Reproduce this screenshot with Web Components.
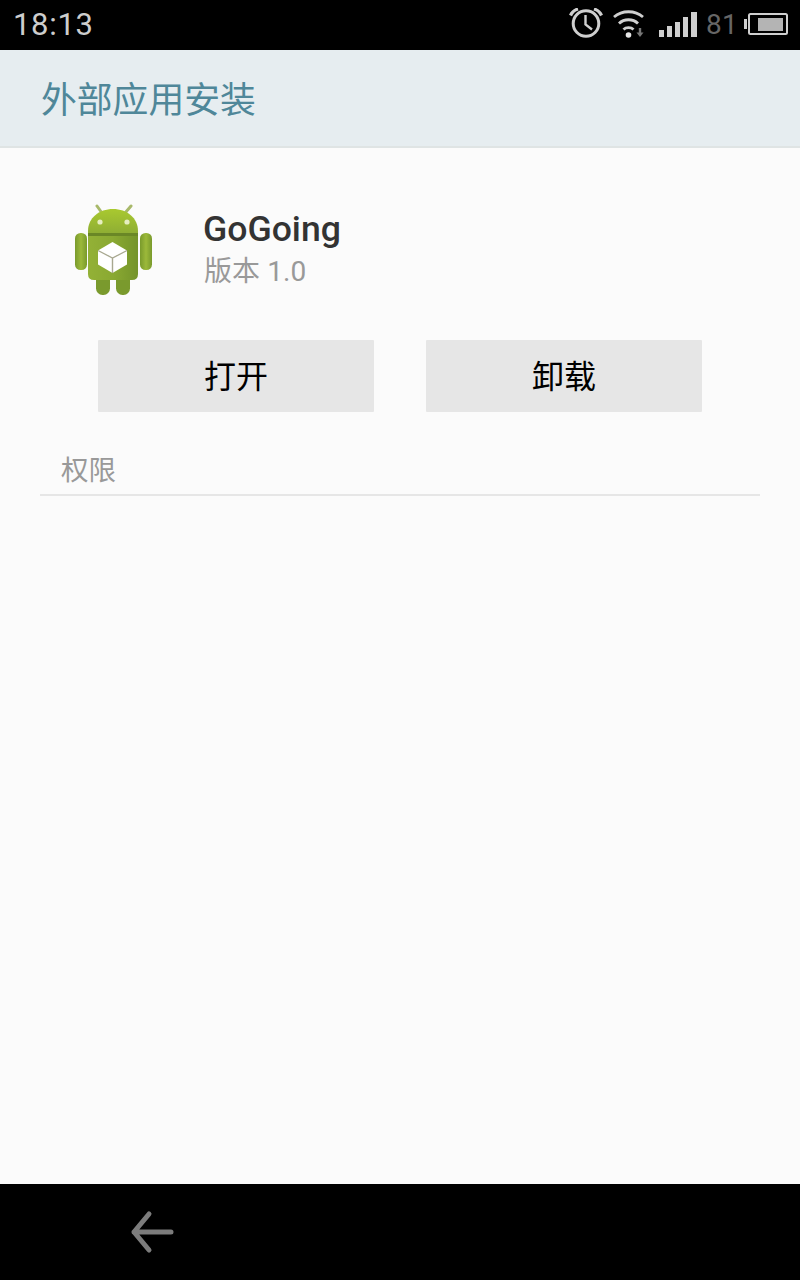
<!DOCTYPE html>
<html lang="zh">
<head>
<meta charset="utf-8">
<title>外部应用安装</title>
<style>
  html, body { margin: 0; height: 100%; background: #fbfbfb; }
  body { font-family: Roboto, "Noto Sans CJK SC", sans-serif; }
  install-page { height: 1280px; }
</style>
</head>
<body>
<install-page>
  <status-bar slot="status" time="18:13" level="81"></status-bar>
  <title-bar slot="title">外部应用安装</title-bar>
  <app-header name="GoGoing" version="版本 1.0"></app-header>
  <div class="actions" style="display:flex;justify-content:center;gap:52px;margin-top:42px">
    <action-button>打开</action-button>
    <action-button>卸载</action-button>
  </div>
  <section-label>权限</section-label>
  <nav-bar slot="nav"></nav-bar>
</install-page>

<script>
(function ( doc ) {
  const FONT = 'Roboto, "Noto Sans CJK SC", sans-serif';

  /**
   * Small helper, every element below is just a shadow root with a template.
   */
  function define(name, html, init) {
    const tpl = doc.createElement('template');
    tpl.innerHTML = html;
    customElements.define(name, class extends HTMLElement {
      constructor () {
        super();
        this.attachShadow({ mode: 'open' }).appendChild(tpl.content.cloneNode(true));
      }
      connectedCallback() {
        if ( init ) init(this, this.shadowRoot);
      }
    });
  }

  define('install-page', `
    <style>
      :host { display: flex; flex-direction: column; background: #fbfbfb; }
      main { flex: 1; display: block; }
    </style>
    <slot name="status"></slot>
    <slot name="title"></slot>
    <main><slot></slot></main>
    <slot name="nav"></slot>
  `);

  define('status-bar', `
    <style>
      :host { display: flex; align-items: center; height: 50px; background: #000; font-family: ${FONT}; }
      .time { margin-left: 13px; font-size: 31px; letter-spacing: .7px; color: #cdcdcd; line-height: 50px; font-weight: 400; }
      .icons { margin-left: auto; display: flex; align-items: center; }
      svg { display: block; flex: none; }
      .level { width: 30px; margin-left: 9px; font-size: 28px; letter-spacing: .3px; color: #666; line-height: 50px; font-weight: 400; }
    </style>
    <span class="time"></span>
    <div class="icons">
      <svg width="34" height="34" viewBox="0 0 34 34" fill="none" stroke="#cfcfcf">
        <circle cx="17" cy="15.500" r="12.800" stroke-width="3"/>
        <path d="M16.500 7V16.500L23 21.500" stroke-width="2.400"/>
        <path d="M1.500 7.500C3 4 5.500 2 9 1M32.500 7.500C31 4 28.500 2 25 1" stroke-width="3.200"/>
      </svg>
      <svg style="margin-left:10px;margin-top:-2px" width="32" height="28" viewBox="0 0 32 28" fill="none" stroke="#cfcfcf">
        <path d="M1 7C9 0 22 0 30 7" stroke-width="2.800"/>
        <path d="M6 13.500C11 8.500 20 8.500 25 13.500" stroke-width="2.800"/>
        <path d="M10.500 19.500C13 17 18 17 20.500 19.500" stroke-width="2.800"/>
        <circle cx="15.500" cy="25" r="2.800" fill="#e6e6e6" stroke="none"/>
        <path d="M27 18V23" stroke="#777" stroke-width="2.400"/>
        <path d="M23.500 22.500H30.500L27 27Z" fill="#777" stroke="none"/>
      </svg>
      <svg style="margin-left:14px;margin-top:-1px" width="38" height="25" viewBox="0 0 38 25" fill="#cfcfcf">
        <rect x="0" y="18" width="5" height="7"/>
        <rect x="8" y="14" width="5" height="11"/>
        <rect x="16" y="10" width="5" height="15"/>
        <rect x="24" y="5" width="5" height="20"/>
        <rect x="32" y="0" width="6" height="25"/>
      </svg>
      <span class="level"></span>
      <svg style="margin-left:8px;margin-right:12px;margin-top:-2px" width="44" height="22" viewBox="0 0 44 22">
        <rect x="0" y="6" width="3" height="10" fill="#cfcfcf"/>
        <rect x="5" y="1" width="38" height="20" rx="1.500" fill="none" stroke="#cfcfcf" stroke-width="2"/>
        <rect x="14" y="5" width="25" height="13" fill="#b4b4b4"/>
      </svg>
    </div>
  `, function (el, root) {
    root.querySelector('.time').textContent = el.getAttribute('time');
    root.querySelector('.level').textContent = el.getAttribute('level');
  });

  define('title-bar', `
    <style>
      :host { display: flex; align-items: center; height: 94px; padding: 0 0 2px 41px; background: #e6edf0; border-bottom: 2px solid #dfe4e4;
        font: 35.800px "Noto Sans CJK SC", sans-serif; color: #4f8799; }
    </style>
    <slot></slot>
  `);

  define('android-icon', `
    <style>
      :host { display: block; width: 84px; height: 94px; }
      svg { display: block; filter: blur(.6px); }
    </style>
    <svg width="84" height="94" viewBox="0 0 84 94">
      <defs>
        <linearGradient id="head" x1="0" y1="0" x2="0" y2="1">
          <stop offset="0" stop-color="#a9c92f"/>
          <stop offset="1" stop-color="#8fae34"/>
        </linearGradient>
        <linearGradient id="body" x1="0" y1="0" x2="1" y2="0">
          <stop offset="0" stop-color="#93b136"/>
          <stop offset=".5" stop-color="#8aa932"/>
          <stop offset="1" stop-color="#74942a"/>
        </linearGradient>
        <linearGradient id="arm" x1="0" y1="0" x2="1" y2="0">
          <stop offset="0" stop-color="#799a2c"/>
          <stop offset=".5" stop-color="#9cb93a"/>
          <stop offset="1" stop-color="#799a2c"/>
        </linearGradient>
      </defs>
      <path d="M25 2 30 9M59 2 53 9" stroke="#a8b96a" stroke-width="3" stroke-linecap="round"/>
      <path d="M16 29V27C16 14 27 5 41 5S66 14 66 27V29Z" fill="url(#head)"/>
      <rect x="16" y="29" width="50" height="3" fill="#6a8726"/>
      <circle cx="28" cy="18" r="2.600" fill="#e6eec0"/>
      <circle cx="55" cy="18" r="2.600" fill="#e6eec0"/>
      <rect x="3" y="29" width="12" height="37" rx="5.500" fill="url(#arm)"/>
      <rect x="68" y="29" width="12" height="37" rx="5.500" fill="url(#arm)"/>
      <rect x="24" y="68" width="14" height="23" rx="6.500" fill="#7a9a2d"/>
      <rect x="44" y="68" width="14" height="23" rx="6.500" fill="#7a9a2d"/>
      <path d="M16 32H66V70Q66 76 60 76H22Q16 76 16 70Z" fill="url(#body)"/>
      <path d="M40.500 38 26 46.500V60.500L40.500 69 55 60.500V46.500Z" fill="#fff"/>
      <path d="M26 46.500 40.500 54 55 46.500M40.500 54V69" fill="none" stroke="#a8a890" stroke-width="1.400"/>
    </svg>
  `);

  define('app-header', `
    <style>
      :host { display: flex; align-items: center; padding: 56px 0 0 72px; font-family: ${FONT}; }
      .text { margin-left: 47px; margin-top: -4px; }
      .name { font-size: 35.600px; font-weight: 500; line-height: 44px; color: #333; }
      .version { font-size: 28px; line-height: 40px; margin: 1px 0 0 1px; color: #999; letter-spacing: .1px; }
    </style>
    <android-icon></android-icon>
    <div class="text">
      <div class="name"></div>
      <div class="version"></div>
    </div>
  `, function (el, root) {
    root.querySelector('.name').textContent = el.getAttribute('name');
    root.querySelector('.version').textContent = el.getAttribute('version');
  });

  define('action-button', `
    <style>
      :host { display: flex; align-items: center; justify-content: center; box-sizing: border-box; width: 276px; height: 72px; padding-bottom: 4px;
        background: #e6e6e6; border-radius: 1px; font: 32px "Noto Sans CJK SC", sans-serif; color: #000; }
    </style>
    <slot></slot>
  `);

  define('section-label', `
    <style>
      :host { display: block; margin: 38px 40px 0; padding: 0 0 4px 21px; height: 40px; border-bottom: 2px solid #e6e6e6;
        font: 27.500px/36px "Noto Sans CJK SC", sans-serif; color: #999; }
    </style>
    <slot></slot>
  `);

  define('nav-bar', `
    <style>
      :host { display: flex; align-items: center; height: 96px; padding-left: 130px; background: #000; }
      svg { display: block; }
    </style>
    <svg width="44" height="44" viewBox="0 0 44 44" fill="none" stroke="#7c7c7c" stroke-width="5" stroke-linecap="round" stroke-linejoin="round">
      <path d="M19 4 4 22 19 40M4 22H41"/>
    </svg>
  `);
})( document );
</script>
</body>
</html>
